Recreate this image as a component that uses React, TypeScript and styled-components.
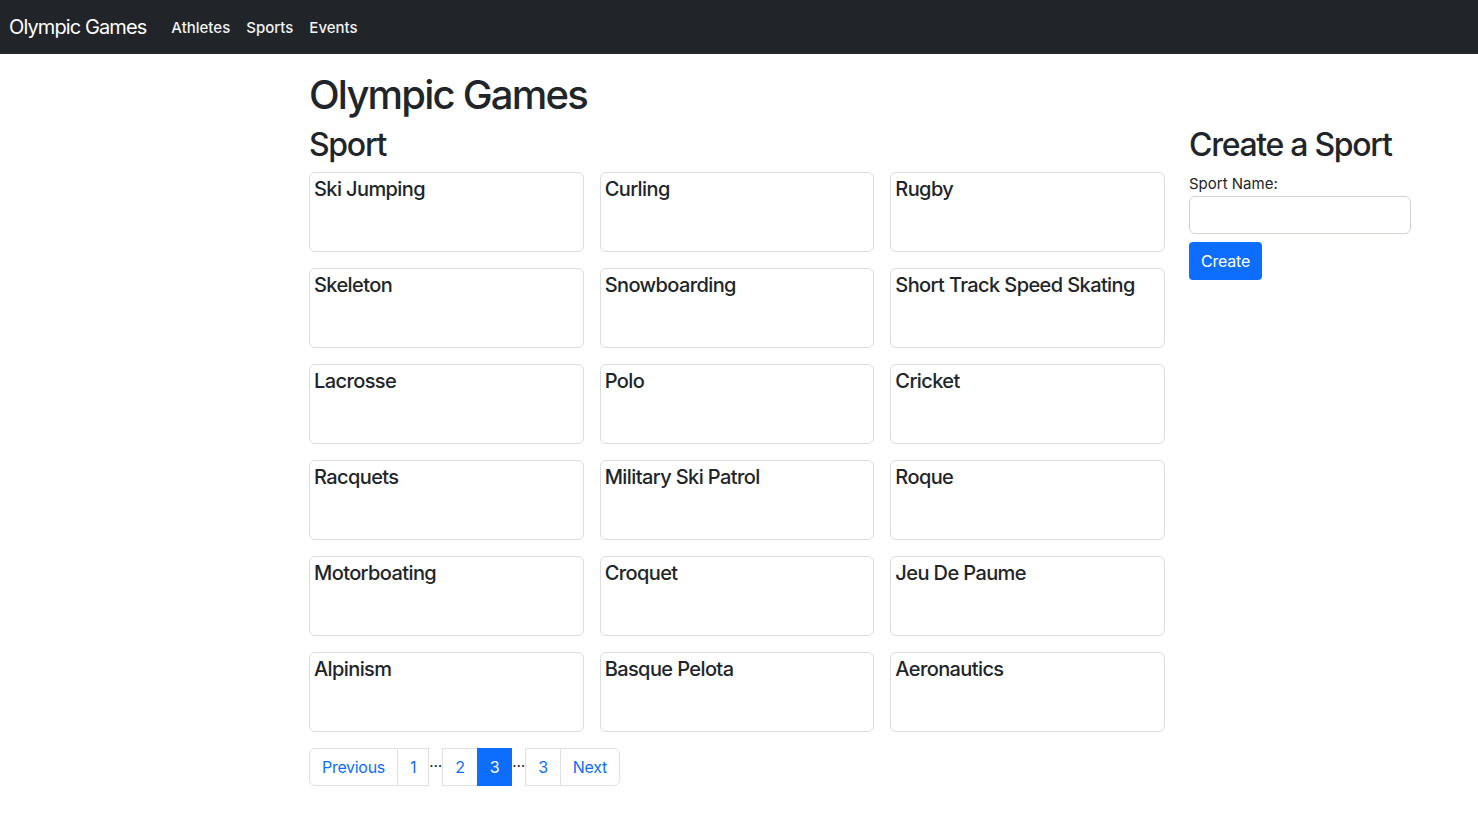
import styled, { createGlobalStyle } from 'styled-components';

const sports = [
  'Ski Jumping',
  'Curling',
  'Rugby',
  'Skeleton',
  'Snowboarding',
  'Short Track Speed Skating',
  'Lacrosse',
  'Polo',
  'Cricket',
  'Racquets',
  'Military Ski Patrol',
  'Roque',
  'Motorboating',
  'Croquet',
  'Jeu De Paume',
  'Alpinism',
  'Basque Pelota',
  'Aeronautics',
];

const GlobalStyle = createGlobalStyle`
  body {
    margin: 0;
    font-family: Inter, "Noto Sans", "Liberation Sans", sans-serif;
    color: #212529;
    background: #fff;
  }
  * {
    box-sizing: border-box;
  }
`;

const Navbar = styled.nav`
  height: 54px;
  background: #212529;
  display: flex;
  align-items: center;
  padding: 0 9px;
`;

const Brand = styled.a`
  color: #fff;
  font-size: 20px;
  letter-spacing: -0.9px;
  margin-right: 17px;
  text-decoration: none;
`;

const NavLink = styled.a`
  color: #f2f2f2;
  font-size: 15px;
  font-weight: 500;
  padding: 8px;
  text-decoration: none;
`;

const Main = styled.main`
  padding: 17px 0 40px 309px;
`;

const Title = styled.h1`
  font-size: 40px;
  font-weight: 500;
  line-height: 1.2;
  letter-spacing: -1.8px;
  margin: 0 0 7px;
`;

const Row = styled.div`
  display: grid;
  grid-template-columns: 856px 222px;
  column-gap: 24px;
`;

const Heading = styled.h2`
  font-size: 32px;
  font-weight: 500;
  line-height: 1.2;
  letter-spacing: -1.3px;
  margin: 0 0 8px;
`;

const Grid = styled.div`
  display: grid;
  grid-template-columns: repeat(3, 1fr);
  gap: 16px;
`;

const Card = styled.div`
  height: 80px;
  border: 1px solid #dcdcdc;
  border-radius: 6px;
  padding: 4px 4px;
`;

const CardTitle = styled.h5`
  margin: 0;
  font-size: 20px;
  font-weight: 500;
  line-height: 1.2;
  letter-spacing: -0.6px;
`;

const Pagination = styled.ul`
  display: flex;
  list-style: none;
  padding: 0;
  margin: 16px 0 0;
`;

const PageItem = styled.li<{ $active?: boolean; $first?: boolean; $last?: boolean }>`
  padding: 6px 12px;
  font-size: 16px;
  line-height: 24px;
  letter-spacing: -0.3px;
  border: 1px solid ${(p) => (p.$active ? '#0d6efd' : '#dee2e6')};
  margin-left: ${(p) => (p.$first ? '0' : '-1px')};
  background: ${(p) => (p.$active ? '#0d6efd' : '#fff')};
  color: ${(p) => (p.$active ? '#fff' : '#0d6efd')};
  border-radius: ${(p) => (p.$first ? '6px 0 0 6px' : p.$last ? '0 6px 6px 0' : '0')};
`;

const Dots = styled.li`
  width: 13px;
  text-align: center;
  font-size: 15px;
  line-height: 1;
  padding-top: 6px;
  color: #212529;
`;

const Label = styled.label`
  display: block;
  font-size: 15px;
  line-height: 24px;
`;

const Input = styled.input`
  display: block;
  width: 100%;
  height: 38px;
  border: 1px solid #ced4da;
  border-radius: 6px;
  margin-bottom: 8px;
`;

const Button = styled.button`
  background: #0d6efd;
  color: #fff;
  border: 0;
  border-radius: 4px;
  height: 38px;
  padding: 0 12px;
  font-family: inherit;
  font-size: 16px;
  letter-spacing: -0.2px;
`;

export default function App() {
  return (
    <>
      <GlobalStyle />
      <Navbar>
        <Brand>Olympic Games</Brand>
        <NavLink>Athletes</NavLink>
        <NavLink>Sports</NavLink>
        <NavLink>Events</NavLink>
      </Navbar>
      <Main>
        <Title>Olympic Games</Title>
        <Row>
          <section>
            <Heading>Sport</Heading>
            <Grid>
              {sports.map((s) => (
                <Card key={s}>
                  <CardTitle>{s}</CardTitle>
                </Card>
              ))}
            </Grid>
            <Pagination>
              <PageItem $first>Previous</PageItem>
              <PageItem>1</PageItem>
              <Dots>…</Dots>
              <PageItem $first style={{ borderRadius: 0 }}>2</PageItem>
              <PageItem $active>3</PageItem>
              <Dots>…</Dots>
              <PageItem $first style={{ borderRadius: 0 }}>3</PageItem>
              <PageItem $last>Next</PageItem>
            </Pagination>
          </section>
          <aside>
            <Heading>Create a Sport</Heading>
            <Label>Sport Name:</Label>
            <Input />
            <Button>Create</Button>
          </aside>
        </Row>
      </Main>
    </>
  );
}
